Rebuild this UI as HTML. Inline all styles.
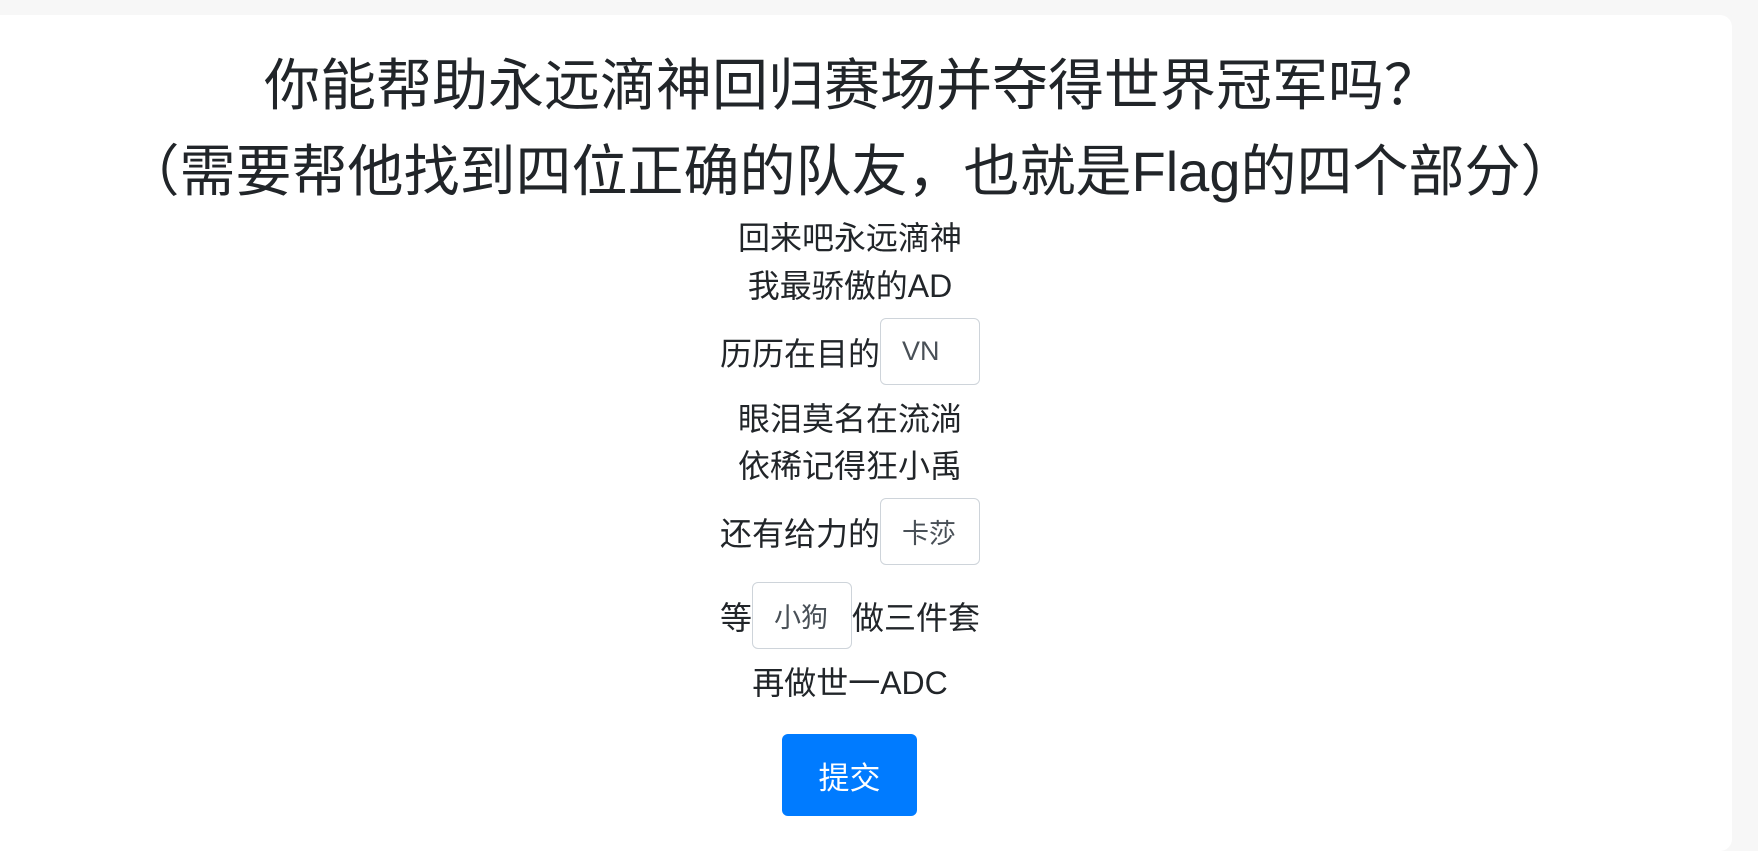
<!DOCTYPE html>
<html><head><meta charset="utf-8"><style>
html,body{margin:0;padding:0;width:1758px;height:851px;overflow:hidden;background:#f7f7f7;}
body{font-family:"Liberation Sans","Noto Sans CJK SC",sans-serif;color:#212529;position:relative;}
.card{position:absolute;left:0;top:15px;width:1732px;height:836px;background:#fff;border-radius:0 12px 12px 0;}
.row{position:absolute;left:0;width:1700px;display:flex;justify-content:center;align-items:center;font-size:32px;white-space:nowrap;}
.t{font-size:56px;height:86px;}
.in{width:98px;height:65px;border:1px solid #ced4da;border-radius:6px;box-sizing:content-box;display:flex;align-items:center;font-size:27px;color:#495057;}
.in span{padding-left:21px;}
.btn{position:absolute;left:782px;top:734px;width:135px;height:82px;background:#007bff;border-radius:6px;color:#fff;font-size:31px;display:flex;align-items:center;justify-content:center;}
</style></head><body>
<div class="card"></div>
<div class="row t" style="top:38px;left:2px">你能帮助永远滴神回归赛场并夺得世界冠军吗？</div>
<div class="row t" style="top:124px;left:0px">（需要帮他找到四位正确的队友，也就是Flag的四个部分）</div>
<div class="row" style="top:218px;height:36px">回来吧永远滴神</div>
<div class="row" style="top:266px;height:36px">我最骄傲的AD</div>
<div class="row" style="top:318px;height:67px">历历在目的<div class="in"><span>VN</span></div></div>
<div class="row" style="top:399px;height:36px">眼泪莫名在流淌</div>
<div class="row" style="top:446px;height:36px">依稀记得狂小禹</div>
<div class="row" style="top:498px;height:67px">还有给力的<div class="in"><span>卡莎</span></div></div>
<div class="row" style="top:582px;height:67px">等<div class="in"><span>小狗</span></div>做三件套</div>
<div class="row" style="top:663px;height:36px">再做世一ADC</div>
<div class="btn">提交</div>
</body></html>
